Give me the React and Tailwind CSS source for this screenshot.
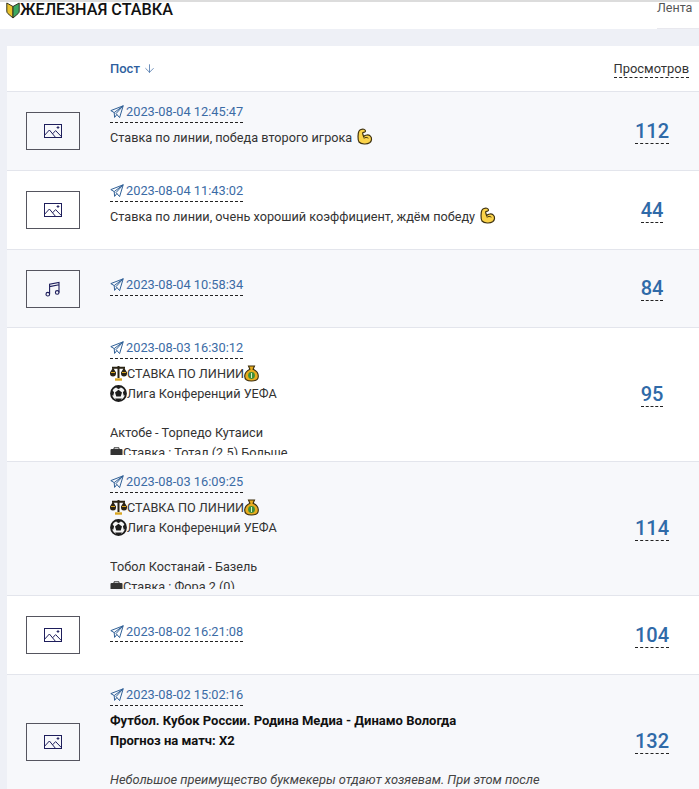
import { ArrowDown } from 'lucide-react'

function PlaneIcon() {
  return (
    <svg width="14" height="14" viewBox="0 0 14 14" fill="none" stroke="#2f5f96" strokeWidth="1" strokeLinejoin="round" className="shrink-0">
      <path d="M13.2 .8 .8 5.6l3.4 2L13.2 .8 9.6 12.6 6 8.6 13.2 .8Z" />
      <path d="M4.2 7.6 4.6 12.4 6.8 9.6" />
    </svg>
  )
}

function ImageIcon() {
  return (
    <svg width="18" height="14" viewBox="0 0 18 14" fill="none" stroke="#1e1e5c" strokeWidth="1">
      <rect x=".5" y=".5" width="17" height="13" />
      <path d="M.8 11 5.400 6l5.800 7M8.600 9.800l3-3.200 5.800 6" />
      <path d="M14 2v3M12.600 3.500h2.800" strokeWidth=".9" />
    </svg>
  )
}

function MusicIcon() {
  return (
    <svg width="16" height="16" viewBox="0 0 16 16" fill="none" stroke="#1e1e5c" strokeWidth="1.1">
      <circle cx="2.8" cy="13.2" r="1.8" />
      <circle cx="12.2" cy="11.4" r="1.8" />
      <path d="M4.6 13V3.2L14 1.4v10M4.6 5.6 14 3.8" />
    </svg>
  )
}

function Muscle() {
  return (
    <svg width="18" height="17" viewBox="0 0 18 17" className="inline-block align-[-3px]">
      <path d="M6 1.5C8 .8 10 1.2 10.4 2.6c.3 1-.6 1.8-2 1.8-.6 0-.9.6-.6 1.600l.8 2.600c1.400-2 5-2.200 6.800-.4 1.800 1.800 1.400 5-.8 6.600-2.600 1.800-8.400 1.600-10.600-.8C2.600 12.200 2.800 5 4 3c.4-.8 1.200-1.200 2-1.500Z" fill="#fbd34a" stroke="#3f3210" strokeWidth="1.200" />
      <path d="M8.800 10.400c1.400-1.200 3.200-1.200 4.600-.2" fill="none" stroke="#3f3210" strokeWidth="1" />
    </svg>
  )
}

function Scales() {
  return (
    <svg width="17" height="16" viewBox="0 0 17 16" className="inline-block align-[-3px] shrink-0">
      <path d="M8.500 1v12M2 2.800h13" stroke="#2b2415" strokeWidth="2" />
      <path d="M0 7.500 3 2.500l3 5v1a3 3 0 0 1-6 0ZM11 7.500l3-5 3 5v1a3 3 0 0 1-6 0Z" fill="#2b2415" />
      <path d="M1 7.500h4M12 7.500h4" stroke="#d9a520" strokeWidth="1" />
      <path d="M5 14.500h7" stroke="#d9a520" strokeWidth="2.400" />
    </svg>
  )
}

function MoneyBag() {
  return (
    <svg width="15" height="17" viewBox="0 0 15 17" className="inline-block align-[-4px] shrink-0">
      <path d="M4.500 1h6l-1.400 3.200c3 1.400 5.200 4.400 5.200 7 0 3.200-2.600 4.800-6.800 4.800S.7 14.400.7 11.200c0-2.600 2.200-5.600 5.200-7L4.500 1Z" fill="#e8ad1e" stroke="#3a2c0c" strokeWidth="1.100" />
      <circle cx="7.500" cy="10.500" r="3.400" fill="#3e8e3a" />
      <path d="M7.500 8v5" stroke="#d9f0c0" strokeWidth="1" />
    </svg>
  )
}

function Ball() {
  return (
    <svg width="17" height="17" viewBox="0 0 17 17" className="inline-block align-[-4px] shrink-0">
      <circle cx="8.500" cy="8.500" r="7.500" fill="#f4f4f4" stroke="#1c1c1c" strokeWidth="1.800" />
      <path d="M8.500 4.800 12 7.400 10.700 11.600H6.300L5 7.400Z" fill="#1c1c1c" />
      <path d="M8.500 1 11 2.800 8.500 4 6 2.800ZM1 9l1.500-4 1.600 2.600-1 3.400ZM16 9l-1.500-4-1.600 2.600 1 3.400ZM5 13.500h7l-2 2.500H7Z" fill="#1c1c1c" />
    </svg>
  )
}

function Case() {
  return (
    <svg width="13" height="11" viewBox="0 0 13 11" className="inline-block align-[-1px] shrink-0">
      <path d="M4 2V.8h5V2" fill="none" stroke="#333" strokeWidth="1" />
      <rect x=".5" y="2" width="12" height="9" rx="1" fill="#333" />
    </svg>
  )
}

function Shield() {
  return (
    <svg width="14" height="17" viewBox="0 0 14 17" className="shrink-0">
      <path d="M.8 1 7 4.500V16L1.800 11.500C1 10.800.8 10 .8 9Z" fill="#e9c22c" stroke="#33331f" strokeWidth="1" />
      <path d="M13.200 1 7 4.500V16l5.200-4.500c.8-.7 1-1.500 1-2.500Z" fill="#3aa760" stroke="#33331f" strokeWidth="1" />
    </svg>
  )
}

function Thumb({ kind }) {
  return (
    <div className="w-[54px] h-[38px] border border-[#55555f] flex items-center justify-center">
      {kind === 'music' ? <MusicIcon /> : <ImageIcon />}
    </div>
  )
}

function Tip({ lines }) {
  return (
    <div className="mt-[6px] max-h-[91px] overflow-hidden leading-[19.8px] text-[12.7px] text-[#333]">
      {lines}
    </div>
  )
}

function Row({ date, views, thumb, alt, height, children }) {
  return (
    <div className={`flex items-center border-b border-[#e3e5ec] ${height} ${alt ? 'bg-[#f7f8fb]' : 'bg-white'}`}>
      <div className="w-[103px] pl-[19px] shrink-0">
        {thumb && <Thumb kind={thumb} />}
      </div>
      <div className={`flex-1 min-w-0 ${children ? 'self-start pt-[10px]' : 'pb-[7px]'}`}>
        <div className="h-[20px]">
          <a className="inline-flex items-center gap-[2px] h-[20px] border-b border-dashed border-[#222] text-[12.8px] text-[#3b6ba5]">
            <PlaneIcon />
            {date}
          </a>
        </div>
        {children && <Tip lines={children} />}
      </div>
      <div className="w-[94px] shrink-0 flex justify-center">
        <span className="border-b border-dashed border-[#222] text-[20px] leading-[24px] font-medium text-[#2f6aa8]">{views}</span>
      </div>
    </div>
  )
}

export default function App() {
  return (
    <div className="h-[789px] overflow-hidden bg-[#eef0f6] font-['Roboto',sans-serif]">
      <div className="h-[29px] bg-white border-t-2 border-[#dcdcdc] flex justify-between pl-[6px]">
        <div className="flex items-start text-[16.2px] leading-[16px] font-medium text-[#111]">
          <Shield />
          <span>ЖЕЛЕЗНАЯ СТАВКА</span>
        </div>
        <div className="w-[42px] h-[27px] border-b border-[#e8e8ee] text-[12.5px] leading-[12px] text-[#555]">Лента</div>
      </div>

      <div className="ml-[7px] mt-[17px] bg-white">
        <div className="h-[46px] flex items-center border-b border-[#e3e5ec] pr-[10px] pl-[103px]">
          <div className="flex-1 flex items-center gap-[3px] text-[13px] font-medium text-[#2f5f9e]">
            Пост
            <ArrowDown size={13} strokeWidth={1.3} />
          </div>
          <span className="border-b border-dashed border-[#222] text-[12.9px] leading-[17px] text-[#333]">Просмотров</span>
        </div>

        <Row alt height="h-[79px]" thumb="image" date="2023-08-04 12:45:47" views="112">
          <>Ставка по линии, победа второго игрока <Muscle /></>
        </Row>
        <Row height="h-[79px]" thumb="image" date="2023-08-04 11:43:02" views="44">
          <>Ставка по линии, очень хороший коэффициент, ждём победу <Muscle /></>
        </Row>
        <Row alt height="h-[78px]" thumb="music" date="2023-08-04 10:58:34" views="84" />
        <Row height="h-[134px]" date="2023-08-03 16:30:12" views="95">
          <>
            <div><Scales />СТАВКА ПО ЛИНИИ<MoneyBag /></div>
            <div><Ball />Лига Конференций УЕФА</div>
            <div className="h-[19.8px]" />
            <div>Актобе - Торпедо Кутаиси</div>
            <div><Case />Ставка : Тотал (2.5) Больше</div>
          </>
        </Row>
        <Row alt height="h-[134px]" date="2023-08-03 16:09:25" views="114">
          <>
            <div><Scales />СТАВКА ПО ЛИНИИ<MoneyBag /></div>
            <div><Ball />Лига Конференций УЕФА</div>
            <div className="h-[19.8px]" />
            <div>Тобол Костанай - Базель</div>
            <div><Case />Ставка : Фора 2 (0)</div>
          </>
        </Row>
        <Row height="h-[79px]" thumb="image" date="2023-08-02 16:21:08" views="104" />
        <Row alt height="h-[134px]" thumb="image" date="2023-08-02 15:02:16" views="132">
          <>
            <div className="font-bold text-[13px] text-[#111]">Футбол. Кубок России. Родина Медиа - Динамо Вологда</div>
            <div className="font-bold text-[13px] text-[#111]">Прогноз на матч: Х2</div>
            <div className="h-[19.8px]" />
            <div className="italic text-[12.85px] text-[#444]">Небольшое преимущество букмекеры отдают хозяевам. При этом после</div>
          </>
        </Row>
      </div>
    </div>
  )
}
